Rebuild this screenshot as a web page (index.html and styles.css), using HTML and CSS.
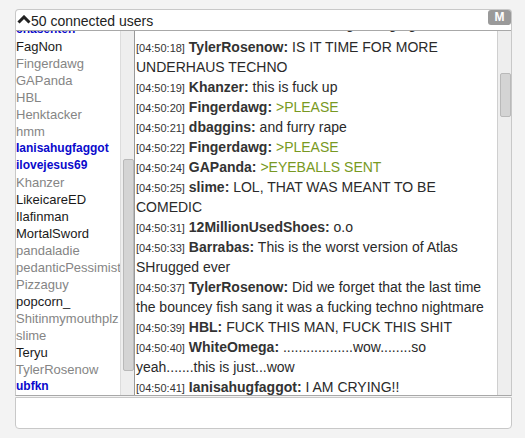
FILE: index.html
```html
<!DOCTYPE html>
<html>
<head>
<meta charset="utf-8">
<link rel="stylesheet" href="styles.css">
</head>
<body>
<div class="app">
  <div class="panel">
    <div class="header">
      <svg class="chev" width="14" height="9" viewBox="0 0 14 9"><polyline points="1.5,7.5 7,2 12.5,7.5" fill="none" stroke="#222" stroke-width="3"/></svg>
      <span class="count">50 connected users</span>
      <span class="badge">M</span>
    </div>
    <div class="body">
      <div class="users">
        <div class="ulist">
          <div class="u sub">chasehten</div>
          <div class="u reg">FagNon</div>
          <div class="u dim">Fingerdawg</div>
          <div class="u dim">GAPanda</div>
          <div class="u dim">HBL</div>
          <div class="u dim">Henktacker</div>
          <div class="u dim">hmm</div>
          <div class="u sub">Ianisahugfaggot</div>
          <div class="u sub">ilovejesus69</div>
          <div class="u dim">Khanzer</div>
          <div class="u reg">LikeicareED</div>
          <div class="u reg">Ilafinman</div>
          <div class="u reg">MortalSword</div>
          <div class="u dim">pandaladie</div>
          <div class="u dim">pedanticPessimist</div>
          <div class="u dim">Pizzaguy</div>
          <div class="u reg">popcorn_</div>
          <div class="u dim">Shitinmymouthplz</div>
          <div class="u dim">slime</div>
          <div class="u reg">Teryu</div>
          <div class="u dim">TylerRosenow</div>
          <div class="u sub">ubfkn</div>
        </div>
      </div>
      <div class="track track-users"><div class="thumb thumb-users"></div></div>
      <div class="chat">
        <div class="msgs">
          <div class="m partial">&nbsp; &nbsp; &nbsp; &nbsp; &nbsp; &nbsp; &nbsp; &nbsp; &nbsp; &nbsp; &nbsp; &nbsp; &nbsp; &nbsp; &nbsp; &nbsp; &nbsp; &nbsp; &nbsp; &nbsp; &nbsp; &nbsp; &nbsp; &nbsp; &nbsp; &nbsp; &nbsp; gonna go go  &nbsp; &nbsp; &nbsp; &nbsp; &nbsp; &nbsp; &nbsp; &nbsp; &nbsp; go</div>
          <div class="m"><span class="ts">[04:50:18]</span> <b>TylerRosenow:</b> IS IT TIME FOR MORE UNDERHAUS TECHNO</div>
          <div class="m"><span class="ts">[04:50:19]</span> <b>Khanzer:</b> this is fuck up</div>
          <div class="m"><span class="ts">[04:50:20]</span> <b>Fingerdawg:</b> <span class="green">&gt;PLEASE</span></div>
          <div class="m"><span class="ts">[04:50:21]</span> <b>dbaggins:</b> and furry rape</div>
          <div class="m"><span class="ts">[04:50:22]</span> <b>Fingerdawg:</b> <span class="green">&gt;PLEASE</span></div>
          <div class="m"><span class="ts">[04:50:24]</span> <b>GAPanda:</b> <span class="green">&gt;EYEBALLS SENT</span></div>
          <div class="m"><span class="ts">[04:50:25]</span> <b>slime:</b> LOL, THAT WAS MEANT TO BE COMEDIC</div>
          <div class="m"><span class="ts">[04:50:31]</span> <b>12MillionUsedShoes:</b> o.o</div>
          <div class="m"><span class="ts">[04:50:33]</span> <b>Barrabas:</b> This is the worst version of Atlas SHrugged ever</div>
          <div class="m"><span class="ts">[04:50:37]</span> <b>TylerRosenow:</b> Did we forget that the last time the bouncey fish sang it was a fucking techno nightmare</div>
          <div class="m"><span class="ts">[04:50:39]</span> <b>HBL:</b> FUCK THIS MAN, FUCK THIS SHIT</div>
          <div class="m"><span class="ts">[04:50:40]</span> <b>WhiteOmega:</b> ..................wow........so yeah.......this is just...wow</div>
          <div class="m"><span class="ts">[04:50:41]</span> <b>Ianisahugfaggot:</b> I AM CRYING!!</div>
        </div>
      </div>
      <div class="track track-chat"><div class="thumb thumb-chat"></div></div>
    </div>
  </div>
  <div class="input"></div>
</div>
</body>
</html>
```

FILE: styles.css
```css
html, body {
  margin: 0;
  padding: 0;
  background: #f3f3f3;
  font-family: "Liberation Sans", Arial, sans-serif;
}

.app {
  margin: 9px 0 0 15px;
  width: 497px;
}

.panel {
  background: #fff;
  border: 1px solid #c8c8c8;
  border-bottom: 1px solid #a8a8a8;
  border-radius: 4px 4px 0 0;
}

.header {
  height: 20px;
  display: flex;
  align-items: center;
  border-bottom: 1px solid #a8a8a8;
}

.chev {
  margin: 0 0 1px 1px;
  display: block;
}

.count {
  font-size: 14px;
  color: #222;
  line-height: 20px;
  padding-top: 1px;
}

.badge {
  margin-left: auto;
  margin-right: 0;
  background: #9a9a9a;
  color: #fff;
  font-weight: bold;
  font-size: 12px;
  width: 23px;
  height: 15px;
  line-height: 15px;
  text-align: center;
  border-radius: 3px;
  align-self: flex-start;
}

.body {
  display: flex;
  height: 364px;
  overflow: hidden;
}

.users {
  width: 104px;
  overflow: hidden;
}

.ulist {
  margin-top: -10px;
}

.u {
  height: 17px;
  line-height: 17px;
  font-size: 13px;
  white-space: nowrap;
}

.u.dim { color: #858585; }
.u.reg { color: #1a1a1a; }
.u.sub { color: #0a0acc; font-weight: bold; font-size: 12px; }

.track {
  width: 13px;
  background: #eeeeee;
  border-left: 1px solid #dcdcdc;
  flex-shrink: 0;
}

.thumb {
  width: 9px;
  margin-left: 2px;
  background: #d4d4d4;
  border: 1px solid #b9b9b9;
  border-radius: 2px;
}

.thumb-users {
  margin-top: 128px;
  height: 210px;
}

.chat {
  flex: 1;
  border-left: 1px solid #999;
  overflow: hidden;
  padding-left: 1px;
}

.track-chat {
  border-left: 1px solid #cfcfcf;
}

.thumb-chat {
  margin-top: 42px;
  height: 42px;
}

.msgs {
  margin-top: -14px;
}

.m {
  font-size: 14px;
  line-height: 20px;
  height: auto;
  color: #2a2a2a;
}

.m.partial {
  height: 20px;
  overflow: hidden;
  white-space: nowrap;
  position: relative;
  top: -3px;
}

.m b {
  color: #333;
  line-height: 1;
}

.ts {
  font-size: 11px;
  color: #333;
  line-height: 1;
}

.green {
  color: #789922;
}

.input {
  margin-top: 1px;
  height: 30px;
  background: #fff;
  border: 1px solid #c8c8c8;
  border-radius: 0 0 4px 4px;
}
```
